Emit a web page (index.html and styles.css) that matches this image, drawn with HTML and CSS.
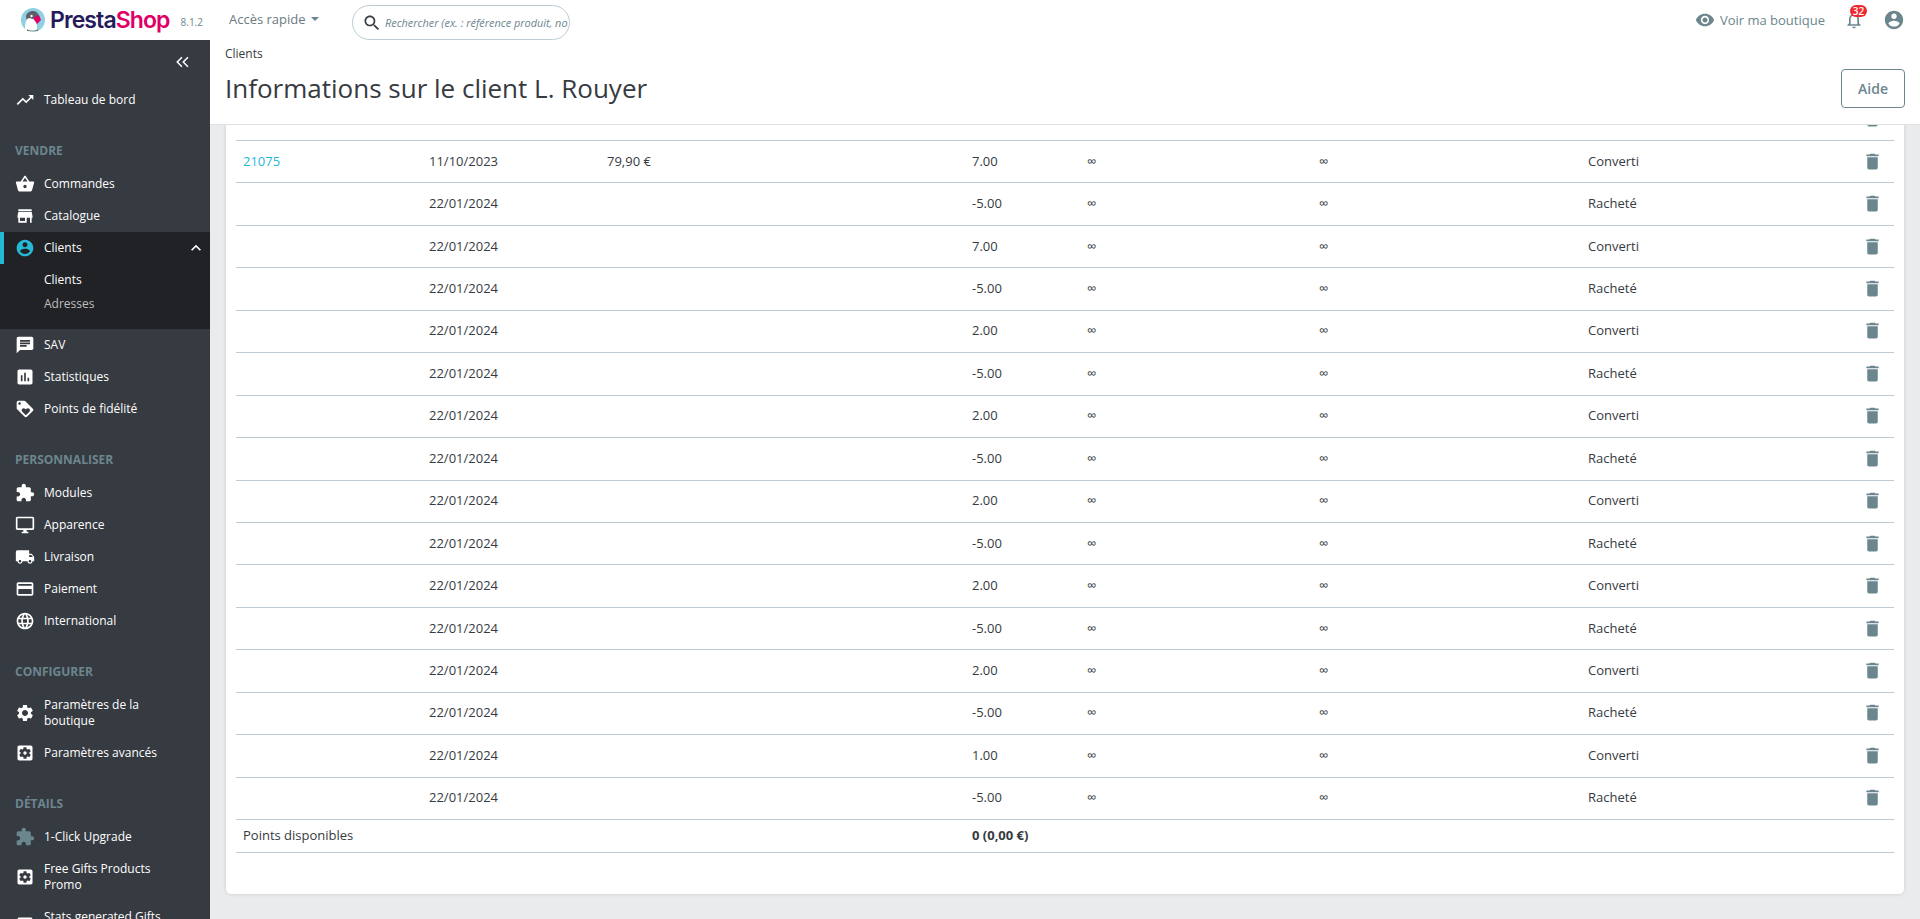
FILE: index.html
```html
<!DOCTYPE html>
<html lang="fr">
<head>
    <meta charset="UTF-8">
    <title>Informations sur le client L. Rouyer</title>
    <link rel="stylesheet" href="styles.css">
</head>
<body>
    <svg class="sprite" xmlns="http://www.w3.org/2000/svg">
        <symbol id="i-trend" viewBox="0 0 24 24"><path d="M16 6l2.29 2.29-4.88 4.88-4-4L2 16.59 3.41 18l6-6 4 4 6.3-6.29L22 12V6z"/></symbol>
        <symbol id="i-basket" viewBox="0 0 24 24"><path d="M17.21 9l-4.38-6.56c-.19-.28-.51-.42-.83-.42-.32 0-.64.14-.83.43L6.79 9H2c-.55 0-1 .45-1 1 0 .09.01.18.04.27l2.54 9.27c.23.84 1 1.46 1.92 1.46h13c.92 0 1.69-.62 1.93-1.46l2.54-9.27L23 10c0-.55-.45-1-1-1h-4.79zM9 9l3-4.4L15 9H9zm3 8c-1.1 0-2-.9-2-2s.9-2 2-2 2 .9 2 2-.9 2-2 2z"/></symbol>
        <symbol id="i-store" viewBox="0 0 24 24"><path d="M20 4H4v2h16V4zm1 10v-2l-1-5H4l-1 5v2h1v6h10v-6h4v6h2v-6h1zm-9 4H6v-4h6v4z"/></symbol>
        <symbol id="i-account" viewBox="0 0 24 24"><path d="M12 2C6.48 2 2 6.48 2 12s4.48 10 10 10 10-4.48 10-10S17.52 2 12 2zm0 3c1.66 0 3 1.34 3 3s-1.34 3-3 3-3-1.34-3-3 1.34-3 3-3zm0 14.2c-2.5 0-4.71-1.28-6-3.22.03-1.99 4-3.08 6-3.08 1.99 0 5.97 1.09 6 3.08-1.29 1.94-3.5 3.22-6 3.22z"/></symbol>
        <symbol id="i-up" viewBox="0 0 24 24"><path d="M7.41 15.41L12 10.83l4.59 4.58L18 14l-6-6-6 6z"/></symbol>
        <symbol id="i-chat" viewBox="0 0 24 24"><path d="M20 2H4c-1.1 0-1.99.9-1.99 2L2 22l4-4h14c1.1 0 2-.9 2-2V4c0-1.1-.9-2-2-2zM6 9h12v2H6V9zm8 5H6v-2h8v2zm4-6H6V6h12v2z"/></symbol>
        <symbol id="i-stats" viewBox="0 0 24 24"><path d="M19 3H5c-1.1 0-2 .9-2 2v14c0 1.1.9 2 2 2h14c1.1 0 2-.9 2-2V5c0-1.1-.9-2-2-2zM9 17H7v-7h2v7zm4 0h-2V7h2v10zm4 0h-2v-4h2v4z"/></symbol>
        <symbol id="i-loyalty" viewBox="0 0 24 24"><path d="M21.41 11.58l-9-9C12.05 2.22 11.55 2 11 2H4c-1.1 0-2 .9-2 2v7c0 .55.22 1.05.59 1.42l9 9c.36.36.86.58 1.41.58s1.05-.22 1.41-.59l7-7c.37-.36.59-.86.59-1.41s-.23-1.06-.59-1.42zM5.5 7C4.67 7 4 6.33 4 5.5S4.67 4 5.5 4 7 4.67 7 5.5 6.33 7 5.5 7zm11.77 8.27L13 19.54l-4.27-4.27C8.28 14.81 8 14.19 8 13.5c0-1.38 1.12-2.5 2.5-2.5.69 0 1.32.28 1.77.74l.73.72.73-.73c.45-.45 1.08-.73 1.77-.73 1.38 0 2.5 1.12 2.5 2.5 0 .69-.28 1.32-.73 1.77z"/></symbol>
        <symbol id="i-extension" viewBox="0 0 24 24"><path d="M20.5 11H19V7c0-1.1-.9-2-2-2h-4V3.5C13 2.12 11.88 1 10.5 1S8 2.12 8 3.5V5H4c-1.1 0-1.99.9-1.99 2v3.8H3.5c1.49 0 2.7 1.21 2.7 2.7s-1.21 2.7-2.7 2.7H2V20c0 1.1.9 2 2 2h3.8v-1.5c0-1.49 1.21-2.7 2.7-2.7 1.49 0 2.7 1.21 2.7 2.7V22H17c1.1 0 2-.9 2-2v-4h1.5c1.38 0 2.5-1.12 2.5-2.5S21.88 11 20.5 11z"/></symbol>
        <symbol id="i-desktop" viewBox="0 0 24 24"><path d="M21 2H3c-1.1 0-2 .9-2 2v12c0 1.1.9 2 2 2h7v2H8v2h8v-2h-2v-2h7c1.1 0 2-.9 2-2V4c0-1.1-.9-2-2-2zm0 14H3V4h18v12z"/></symbol>
        <symbol id="i-truck" viewBox="0 0 24 24"><path d="M20 8h-3V4H3c-1.1 0-2 .9-2 2v11h2c0 1.66 1.34 3 3 3s3-1.34 3-3h6c0 1.66 1.34 3 3 3s3-1.34 3-3h2v-5l-3-4zM6 18.5c-.83 0-1.5-.67-1.5-1.5s.67-1.5 1.5-1.5 1.5.67 1.5 1.5-.67 1.5-1.5 1.5zm13.5-9l1.96 2.5H17V9.5h2.5zm-1.5 9c-.83 0-1.5-.67-1.5-1.5s.67-1.5 1.5-1.5 1.5.67 1.5 1.5-.67 1.5-1.5 1.5z"/></symbol>
        <symbol id="i-card" viewBox="0 0 24 24"><path d="M20 4H4c-1.11 0-1.99.89-1.99 2L2 18c0 1.11.89 2 2 2h16c1.11 0 2-.89 2-2V6c0-1.11-.89-2-2-2zm0 14H4v-6h16v6zm0-10H4V6h16v2z"/></symbol>
        <symbol id="i-globe" viewBox="0 0 24 24"><path d="M11.99 2C6.47 2 2 6.48 2 12s4.47 10 9.99 10C17.52 22 22 17.52 22 12S17.52 2 11.99 2zm6.93 6h-2.95c-.32-1.25-.78-2.45-1.38-3.56 1.84.63 3.37 1.91 4.33 3.56zM12 4.04c.83 1.2 1.48 2.53 1.91 3.96h-3.82c.43-1.43 1.08-2.76 1.91-3.96zM4.26 14C4.1 13.36 4 12.69 4 12s.1-1.36.26-2h3.38c-.08.66-.14 1.32-.14 2 0 .68.06 1.34.14 2H4.26zm.82 2h2.95c.32 1.25.78 2.45 1.38 3.56-1.84-.63-3.37-1.9-4.33-3.56zm2.95-8H5.08c.96-1.66 2.49-2.93 4.33-3.56C8.81 5.55 8.35 6.75 8.03 8zM12 19.96c-.83-1.2-1.48-2.53-1.91-3.96h3.82c-.43 1.43-1.08 2.76-1.91 3.96zM14.34 14H9.66c-.09-.66-.16-1.32-.16-2 0-.68.07-1.35.16-2h4.68c.09.65.16 1.32.16 2 0 .68-.07 1.34-.16 2zm.25 5.56c.6-1.11 1.06-2.31 1.38-3.56h2.95c-.96 1.65-2.49 2.93-4.33 3.56zM16.36 14c.08-.66.14-1.32.14-2 0-.68-.06-1.34-.14-2h3.38c.16.64.26 1.31.26 2s-.1 1.36-.26 2h-3.38z"/></symbol>
        <symbol id="i-gear" viewBox="0 0 24 24"><path d="M19.14 12.94c.04-.3.06-.61.06-.94 0-.32-.02-.64-.07-.94l2.03-1.58c.18-.14.23-.41.12-.61l-1.92-3.32c-.12-.22-.37-.29-.59-.22l-2.39.96c-.5-.38-1.03-.7-1.62-.94l-.36-2.54c-.04-.24-.24-.41-.48-.41h-3.84c-.24 0-.43.17-.47.41l-.36 2.54c-.59.24-1.13.57-1.62.94l-2.39-.96c-.22-.08-.47 0-.59.22L2.74 8.87c-.12.21-.08.47.12.61l2.03 1.58c-.05.3-.09.63-.09.94s.02.64.07.94l-2.03 1.58c-.18.14-.23.41-.12.61l1.92 3.32c.12.22.37.29.59.22l2.39-.96c.5.38 1.03.7 1.62.94l.36 2.54c.05.24.24.41.48.41h3.84c.24 0 .44-.17.47-.41l.36-2.54c.59-.24 1.13-.56 1.62-.94l2.39.96c.22.08.47 0 .59-.22l1.92-3.32c.12-.22.07-.47-.12-.61l-2.01-1.58zM12 15.6c-1.98 0-3.6-1.62-3.6-3.6s1.62-3.6 3.6-3.6 3.6 1.62 3.6 3.6-1.62 3.6-3.6 3.6z"/></symbol>
        <symbol id="i-gearbox" viewBox="0 0 24 24"><path d="M12 10c-1.1 0-2 .9-2 2s.9 2 2 2 2-.9 2-2-.9-2-2-2zm7-7H5c-1.11 0-2 .9-2 2v14c0 1.1.89 2 2 2h14c1.11 0 2-.9 2-2V5c0-1.1-.89-2-2-2zm-1.75 9c0 .23-.02.46-.05.68l1.48 1.16c.13.11.17.3.08.45l-1.4 2.42c-.09.15-.27.21-.43.15l-1.74-.7c-.36.28-.76.51-1.18.69l-.26 1.85c-.03.17-.18.3-.35.3h-2.8c-.17 0-.32-.13-.35-.29l-.26-1.85c-.43-.18-.82-.41-1.18-.69l-1.74.7c-.16.06-.34 0-.43-.15l-1.4-2.42c-.09-.15-.05-.34.08-.45l1.48-1.16c-.03-.23-.05-.46-.05-.69 0-.23.02-.46.05-.68l-1.48-1.16c-.13-.11-.17-.3-.08-.45l1.4-2.42c.09-.15.27-.21.43-.15l1.74.7c.36-.28.76-.51 1.18-.69l.26-1.85c.03-.17.18-.3.35-.3h2.8c.17 0 .32.13.35.29l.26 1.85c.43.18.82.41 1.18.69l1.74-.7c.16-.06.34 0 .43.15l1.4 2.42c.09.15.05.34-.08.45l-1.48 1.16c.03.23.05.46.05.69z"/></symbol>
        <symbol id="i-search" viewBox="0 0 24 24"><path d="M15.5 14h-.79l-.28-.27C15.41 12.59 16 11.11 16 9.5 16 5.91 13.09 3 9.5 3S3 5.91 3 9.5 5.91 16 9.5 16c1.61 0 3.09-.59 4.23-1.57l.27.28v.79l5 4.99L20.49 19l-4.99-5zm-6 0C7.01 14 5 11.99 5 9.5S7.01 5 9.5 5 14 7.01 14 9.5 11.99 14 9.5 14z"/></symbol>
        <symbol id="i-eye" viewBox="0 0 24 24"><path d="M12 4.5C7 4.5 2.73 7.61 1 12c1.73 4.39 6 7.5 11 7.5s9.27-3.11 11-7.5c-1.73-4.39-6-7.5-11-7.5zM12 17c-2.76 0-5-2.24-5-5s2.24-5 5-5 5 2.24 5 5-2.24 5-5 5zm0-8c-1.66 0-3 1.34-3 3s1.34 3 3 3 3-1.34 3-3-1.34-3-3-3z"/></symbol>
        <symbol id="i-bell" viewBox="0 0 24 24"><path d="M12 22c1.1 0 2-.9 2-2h-4c0 1.1.9 2 2 2zm6-6v-5c0-3.07-1.63-5.64-4.5-6.32V4c0-.83-.67-1.5-1.5-1.5s-1.5.67-1.5 1.5v.68C7.64 5.36 6 7.92 6 11v5l-2 2v1h16v-1l-2-2zm-2 1H8v-6c0-2.48 1.51-4.5 4-4.5s4 2.02 4 4.5v6z"/></symbol>
        <symbol id="i-delete" viewBox="0 0 24 24"><path d="M6 19c0 1.1.9 2 2 2h8c1.1 0 2-.9 2-2V7H6v12zM19 4h-3.5l-1-1h-5l-1 1H5v2h14V4z"/></symbol>
        <symbol id="i-collapse" viewBox="0 0 24 24"><path d="M11.3 6.4L9.9 5l-7 7 7 7 1.4-1.4L5.7 12z"/><path d="M19.3 6.4L17.9 5l-7 7 7 7 1.4-1.4L13.7 12z"/></symbol>
    </svg>

    <header class="topbar">
        <a class="logo" href="#">
            <svg class="logo-bird" viewBox="0 0 24 24">
                <circle cx="12" cy="12" r="12" fill="#8fd0e2"/>
                <path d="M5 8c1-3.500 4-5 7-5s5.500 2 6 5l-5 2-3 4-4 1z" fill="#5c5f66"/>
                <path d="M4 21c0-6 1-10 4-11l4 1 3 3c1 3 1 5 1 8-3 1.500-9 1.500-12-1z" fill="#fff"/>
                <path d="M12 10l6-3 2 5-4 4z" fill="#df0067"/>
                <path d="M6 21c3 2 8 2 11 0v2H6z" fill="#8a7a62"/>
                <circle cx="10.500" cy="8" r="1.200" fill="#fff"/>
            </svg>
            <span class="logo-text"><span class="logo-presta">Presta</span><span class="logo-shop">Shop</span></span>
            <span class="version">8.1.2</span>
        </a>
        <a class="quick" href="#">Accès rapide<span class="caret"></span></a>
        <form class="search">
            <svg class="search-icon"><use href="#i-search"/></svg>
            <input class="search-input" type="text" placeholder="Rechercher (ex. : référence produit, nom de client…)">
        </form>
        <div class="top-right">
            <a class="shop-link" href="#"><svg class="eye"><use href="#i-eye"/></svg>Voir ma boutique</a>
            <span class="bell"><svg class="bell-icon"><use href="#i-bell"/></svg><span class="badge">32</span></span>
            <svg class="user"><use href="#i-account"/></svg>
        </div>
    </header>

    <div class="layout">
        <nav class="sidebar">
            <div class="collapse"><svg class="collapse-icon"><use href="#i-collapse"/></svg></div>
            <a class="item"><svg class="ico"><use href="#i-trend"/></svg><span>Tableau de bord</span></a>

            <div class="section">Vendre</div>
            <a class="item"><svg class="ico"><use href="#i-basket"/></svg><span>Commandes</span></a>
            <a class="item"><svg class="ico"><use href="#i-store"/></svg><span>Catalogue</span></a>
            <div class="open">
                <a class="item active"><svg class="ico ico-blue"><use href="#i-account"/></svg><span>Clients</span><svg class="chevron"><use href="#i-up"/></svg></a>
                <div class="subs">
                    <a class="sub sub-current">Clients</a>
                    <a class="sub">Adresses</a>
                </div>
            </div>
            <a class="item"><svg class="ico"><use href="#i-chat"/></svg><span>SAV</span></a>
            <a class="item"><svg class="ico"><use href="#i-stats"/></svg><span>Statistiques</span></a>
            <a class="item"><svg class="ico"><use href="#i-loyalty"/></svg><span>Points de fidélité</span></a>

            <div class="section">Personnaliser</div>
            <a class="item"><svg class="ico"><use href="#i-extension"/></svg><span>Modules</span></a>
            <a class="item"><svg class="ico"><use href="#i-desktop"/></svg><span>Apparence</span></a>
            <a class="item"><svg class="ico"><use href="#i-truck"/></svg><span>Livraison</span></a>
            <a class="item"><svg class="ico"><use href="#i-card"/></svg><span>Paiement</span></a>
            <a class="item"><svg class="ico"><use href="#i-globe"/></svg><span>International</span></a>

            <div class="section">Configurer</div>
            <a class="item"><svg class="ico"><use href="#i-gear"/></svg><span>Paramètres de la boutique</span></a>
            <a class="item"><svg class="ico"><use href="#i-gearbox"/></svg><span>Paramètres avancés</span></a>

            <div class="section">Détails</div>
            <a class="item"><svg class="ico ico-grey"><use href="#i-extension"/></svg><span>1-Click Upgrade</span></a>
            <a class="item"><svg class="ico"><use href="#i-gearbox"/></svg><span>Free Gifts Products Promo</span></a>
            <a class="item"><svg class="ico"><use href="#i-gearbox"/></svg><span>Stats generated Gifts Products</span></a>
        </nav>

        <div class="main">
            <div class="page-head">
                <div class="head-left">
                    <div class="breadcrumb">Clients</div>
                    <h1 class="title">Informations sur le client L. Rouyer</h1>
                </div>
                <a class="btn-help" href="#">Aide</a>
            </div>
            <div class="content">
                <div class="card">
                    <table class="points">
                        <colgroup>
                            <col class="c1"><col class="c2"><col class="c3"><col class="c4"><col class="c5"><col class="c6"><col class="c7"><col class="c8">
                        </colgroup>
                        <tbody>
                            <tr><td></td><td>11/10/2023</td><td>79,90 €</td><td>7.00</td><td>∞</td><td>∞</td><td>Racheté</td><td class="act"><svg class="trash"><use href="#i-delete"/></svg></td></tr>
                            <tr><td><a class="order" href="#">21075</a></td><td>11/10/2023</td><td>79,90 €</td><td>7.00</td><td>∞</td><td>∞</td><td>Converti</td><td class="act"><svg class="trash"><use href="#i-delete"/></svg></td></tr>
                            <tr><td></td><td>22/01/2024</td><td></td><td>-5.00</td><td>∞</td><td>∞</td><td>Racheté</td><td class="act"><svg class="trash"><use href="#i-delete"/></svg></td></tr>
                            <tr><td></td><td>22/01/2024</td><td></td><td>7.00</td><td>∞</td><td>∞</td><td>Converti</td><td class="act"><svg class="trash"><use href="#i-delete"/></svg></td></tr>
                            <tr><td></td><td>22/01/2024</td><td></td><td>-5.00</td><td>∞</td><td>∞</td><td>Racheté</td><td class="act"><svg class="trash"><use href="#i-delete"/></svg></td></tr>
                            <tr><td></td><td>22/01/2024</td><td></td><td>2.00</td><td>∞</td><td>∞</td><td>Converti</td><td class="act"><svg class="trash"><use href="#i-delete"/></svg></td></tr>
                            <tr><td></td><td>22/01/2024</td><td></td><td>-5.00</td><td>∞</td><td>∞</td><td>Racheté</td><td class="act"><svg class="trash"><use href="#i-delete"/></svg></td></tr>
                            <tr><td></td><td>22/01/2024</td><td></td><td>2.00</td><td>∞</td><td>∞</td><td>Converti</td><td class="act"><svg class="trash"><use href="#i-delete"/></svg></td></tr>
                            <tr><td></td><td>22/01/2024</td><td></td><td>-5.00</td><td>∞</td><td>∞</td><td>Racheté</td><td class="act"><svg class="trash"><use href="#i-delete"/></svg></td></tr>
                            <tr><td></td><td>22/01/2024</td><td></td><td>2.00</td><td>∞</td><td>∞</td><td>Converti</td><td class="act"><svg class="trash"><use href="#i-delete"/></svg></td></tr>
                            <tr><td></td><td>22/01/2024</td><td></td><td>-5.00</td><td>∞</td><td>∞</td><td>Racheté</td><td class="act"><svg class="trash"><use href="#i-delete"/></svg></td></tr>
                            <tr><td></td><td>22/01/2024</td><td></td><td>2.00</td><td>∞</td><td>∞</td><td>Converti</td><td class="act"><svg class="trash"><use href="#i-delete"/></svg></td></tr>
                            <tr><td></td><td>22/01/2024</td><td></td><td>-5.00</td><td>∞</td><td>∞</td><td>Racheté</td><td class="act"><svg class="trash"><use href="#i-delete"/></svg></td></tr>
                            <tr><td></td><td>22/01/2024</td><td></td><td>2.00</td><td>∞</td><td>∞</td><td>Converti</td><td class="act"><svg class="trash"><use href="#i-delete"/></svg></td></tr>
                            <tr><td></td><td>22/01/2024</td><td></td><td>-5.00</td><td>∞</td><td>∞</td><td>Racheté</td><td class="act"><svg class="trash"><use href="#i-delete"/></svg></td></tr>
                            <tr><td></td><td>22/01/2024</td><td></td><td>1.00</td><td>∞</td><td>∞</td><td>Converti</td><td class="act"><svg class="trash"><use href="#i-delete"/></svg></td></tr>
                            <tr><td></td><td>22/01/2024</td><td></td><td>-5.00</td><td>∞</td><td>∞</td><td>Racheté</td><td class="act"><svg class="trash"><use href="#i-delete"/></svg></td></tr>
                            <tr class="total"><td colspan="3">Points disponibles</td><td colspan="5"><strong>0 (0,00 €)</strong></td></tr>
                        </tbody>
                    </table>
                </div>
            </div>
        </div>
    </div>
</body>
</html>
```

FILE: styles.css
```css
* {
    box-sizing: border-box;
}
html, body {
    height: 100%;
}
body {
    margin: 0;
    display: flex;
    flex-direction: column;
    overflow: hidden;
    font-family: "Open Sans", "Liberation Sans", sans-serif;
    font-size: 13px;
    color: #363a41;
    background: #eaebec;
}
a {
    text-decoration: none;
    color: inherit;
}
.sprite {
    display: none;
}

/* top bar */
.topbar {
    flex: none;
    height: 40px;
    display: flex;
    align-items: center;
    background: #fff;
}
.logo {
    display: flex;
    align-items: center;
    width: 229px;
    padding-left: 21px;
}
.logo-bird {
    width: 24px;
    height: 24px;
    margin-right: 5px;
}
.logo-text {
    font-family: Inter, "Open Sans", sans-serif;
    font-size: 23px;
    font-weight: 600;
    letter-spacing: -0.9px;
    line-height: 24px;
}
.logo-presta {
    color: #251b5b;
}
.logo-shop {
    color: #df0067;
}
.version {
    margin-left: 11px;
    margin-top: 4px;
    font-size: 10px;
    color: #6c868e;
}
.quick {
    display: flex;
    align-items: center;
    width: 123px;
    margin-bottom: 2px;
    color: #6c7a80;
}
.caret {
    margin-left: 5px;
    border-top: 4px solid #6c868e;
    border-left: 4px solid transparent;
    border-right: 4px solid transparent;
}
.search {
    display: flex;
    align-items: center;
    align-self: flex-end;
    width: 218px;
    height: 35px;
    padding: 0 1px 0 9px;
    border: 1px solid #bbcdd2;
    border-radius: 18px;
    background: #fff;
}
.search-icon {
    flex: none;
    width: 20px;
    height: 20px;
    fill: #363a41;
}
.search-input {
    flex: 1;
    min-width: 0;
    margin-left: 3px;
    padding: 0;
    border: 0;
    outline: 0;
    background: transparent;
    font-family: inherit;
    font-size: 10.9px;
    font-style: italic;
}
.search-input::placeholder {
    color: #6c868e;
    opacity: 1;
}
.top-right {
    margin-left: auto;
    display: flex;
    align-items: center;
    padding-right: 15px;
}
.shop-link {
    display: flex;
    align-items: center;
    color: #6c868e;
}
.eye {
    width: 20px;
    height: 20px;
    margin-right: 5px;
    fill: #6c868e;
}
.bell {
    position: relative;
    display: block;
    width: 20px;
    height: 20px;
    margin-left: 19px;
}
.bell-icon {
    display: block;
    width: 20px;
    height: 20px;
    fill: #6c868e;
}
.badge {
    position: absolute;
    top: -5px;
    left: 6px;
    width: 17px;
    height: 12px;
    border-radius: 6px;
    background: #f0282d;
    color: #fff;
    font-size: 10px;
    font-weight: 600;
    line-height: 12px;
    text-align: center;
}
.user {
    width: 22px;
    height: 22px;
    margin-left: 19px;
    fill: #6c868e;
}

/* sidebar */
.layout {
    flex: 1;
    min-height: 0;
    display: flex;
}
.sidebar {
    flex: none;
    width: 210px;
    overflow: hidden;
    background: #363a41;
    color: #fff;
}
.collapse {
    height: 44px;
    display: flex;
    justify-content: flex-end;
    align-items: center;
    padding-right: 18px;
}
.collapse-icon {
    width: 18px;
    height: 18px;
    fill: #fff;
}
.item {
    display: flex;
    align-items: center;
    padding: 8px 16px 8px 15px;
    line-height: 16px;
    font-size: 12px;
}
.item span {
    max-width: 135px;
}
.ico {
    flex: none;
    width: 20px;
    height: 20px;
    margin: -2px 9px -2px 0;
    fill: #fff;
}
.ico-blue {
    fill: #25b9d7;
}
.ico-grey {
    fill: #6c868e;
}
.section {
    padding: 26px 0 8px 15px;
    line-height: 18px;
    font-size: 12px;
    font-weight: 700;
    text-transform: uppercase;
    color: #6c868e;
}
.open {
    background: #202226;
}
.active {
    padding-left: 11px;
    border-left: 4px solid #25b9d7;
}
.chevron {
    margin: -2px -12px -2px auto;
    width: 20px;
    height: 20px;
    fill: #fff;
}
.subs {
    padding: 4px 0 13px;
}
.sub {
    display: block;
    padding-left: 44px;
    line-height: 24px;
    font-size: 12px;
    color: #bebebe;
}
.sub-current {
    color: #fff;
}

/* page header */
.main {
    flex: 1;
    min-width: 0;
    display: flex;
    flex-direction: column;
}
.page-head {
    flex: none;
    height: 85px;
    display: flex;
    justify-content: space-between;
    padding: 5px 15px 0;
    background: #fff;
    border-bottom: 1px solid #dfe1e3;
}
.breadcrumb {
    line-height: 18px;
    font-size: 12px;
}
.title {
    margin: 8px 0 0;
    font-size: 26px;
    font-weight: 400;
    line-height: 34px;
}
.btn-help {
    align-self: flex-start;
    margin-top: 24px;
    width: 64px;
    height: 39px;
    border: 1px solid #6c868e;
    border-radius: 4px;
    color: #6c868e;
    font-size: 14px;
    font-weight: 600;
    line-height: 38px;
    text-align: center;
}

/* table card */
.content {
    flex: 1;
    min-height: 0;
    overflow: hidden;
    padding: 0 16px;
}
.card {
    margin-top: -37.44px;
    padding: 10px 10px 41px;
    background: #fff;
    border-radius: 5px;
    box-shadow: 0 0 4px rgba(0, 0, 0, .12);
}
.points {
    width: 100%;
    table-layout: fixed;
    border-collapse: separate;
    border-spacing: 0;
    border-bottom: 1px solid #bbcdd2;
}
.c1 { width: 186px; }
.c2 { width: 178px; }
.c3 { width: 365px; }
.c4 { width: 115px; }
.c5 { width: 232px; }
.c6 { width: 269px; }
.c8 { width: 44px; }
.points td {
    height: 42.44px;
    padding: 0 7px 1px;
    border-top: 1px solid #bbcdd2;
    line-height: 19px;
    vertical-align: middle;
}
.points .act {
    padding: 0 0 1px;
    text-align: center;
}
.order {
    color: #25b9d7;
}
.trash {
    display: block;
    width: 21px;
    height: 21px;
    margin: 0 auto;
    fill: #6c868e;
}
.points .total td {
    height: 33px;
}
.total strong {
    font-weight: 700;
}
```
